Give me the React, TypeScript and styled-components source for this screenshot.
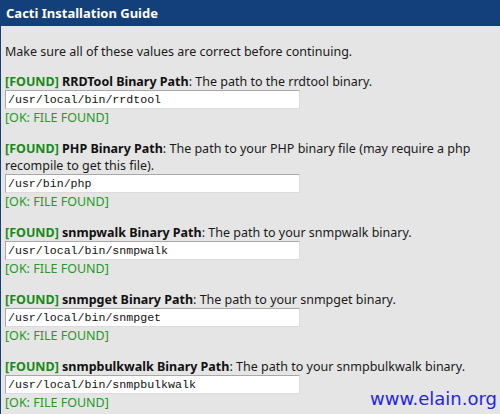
import styled, { createGlobalStyle } from 'styled-components';

const GlobalStyle = createGlobalStyle`
    html, body {
        margin: 0;
        padding: 0;
        width: 500px;
        height: 414px;
        overflow: hidden;
        background: #e5e5e5;
    }
`;

const Page = styled.div`
    position: relative;
    width: 500px;
    height: 414px;
    background: #e5e5e5;
    border-left: 1px solid #13407a;
    box-sizing: border-box;
    font-family: "Noto Sans", "Open Sans", sans-serif;
    font-size: 12.5px;
    color: #1a1a1a;
`;

const Header = styled.div`
    height: 26px;
    margin-left: -1px;
    background: #13407a;
    color: #ffffff;
    font-weight: bold;
    font-size: 13px;
    line-height: 26px;
    padding-left: 6px;
`;

const Content = styled.div`
    padding: 17px 0 0 4px;
    line-height: 17px;
`;

const Intro = styled.p`
    margin: 0 0 13px 0;
`;

const Field = styled.div`
    margin-bottom: 14px;
    width: 490px;
`;

const Found = styled.span`
    color: #178a17;
    font-weight: bold;
`;

const Name = styled.span`
    font-weight: bold;
    color: #111;
`;

const PathInput = styled.input`
    display: block;
    box-sizing: border-box;
    width: 295px;
    height: 19px;
    margin: 0;
    padding: 0 2px;
    border: 1px solid;
    border-color: #a8a8a8 #dcdcdc #dcdcdc #a8a8a8;
    background: #ffffff;
    font-family: "Liberation Mono", monospace;
    font-size: 11.6px;
    color: #111;
    outline: none;
`;

const Status = styled.div`
    color: #239a23;
`;

const Watermark = styled.div`
    position: absolute;
    right: 3px;
    bottom: 5px;
    font-family: "Comic Sans MS", "DejaVu Sans", sans-serif;
    font-size: 18px;
    color: #2424e6;
`;

const fields = [
    { name: 'RRDTool Binary Path', desc: 'The path to the rrdtool binary.', value: '/usr/local/bin/rrdtool' },
    { name: 'PHP Binary Path', desc: 'The path to your PHP binary file (may require a php recompile to get this file).', value: '/usr/bin/php' },
    { name: 'snmpwalk Binary Path', desc: 'The path to your snmpwalk binary.', value: '/usr/local/bin/snmpwalk' },
    { name: 'snmpget Binary Path', desc: 'The path to your snmpget binary.', value: '/usr/local/bin/snmpget' },
    { name: 'snmpbulkwalk Binary Path', desc: 'The path to your snmpbulkwalk binary.', value: '/usr/local/bin/snmpbulkwalk' },
];

export default function App() {
    return (
        <>
            <GlobalStyle />
            <Page>
                <Header>Cacti Installation Guide</Header>
                <Content>
                    <Intro>Make sure all of these values are correct before continuing.</Intro>
                    {fields.map((f) => (
                        <Field key={f.name}>
                            <div>
                                <Found>[FOUND]</Found> <Name>{f.name}</Name>: {f.desc}
                            </div>
                            <PathInput type="text" defaultValue={f.value} />
                            <Status>[OK: FILE FOUND]</Status>
                        </Field>
                    ))}
                </Content>
                <Watermark>www.elain.org</Watermark>
            </Page>
        </>
    );
}
